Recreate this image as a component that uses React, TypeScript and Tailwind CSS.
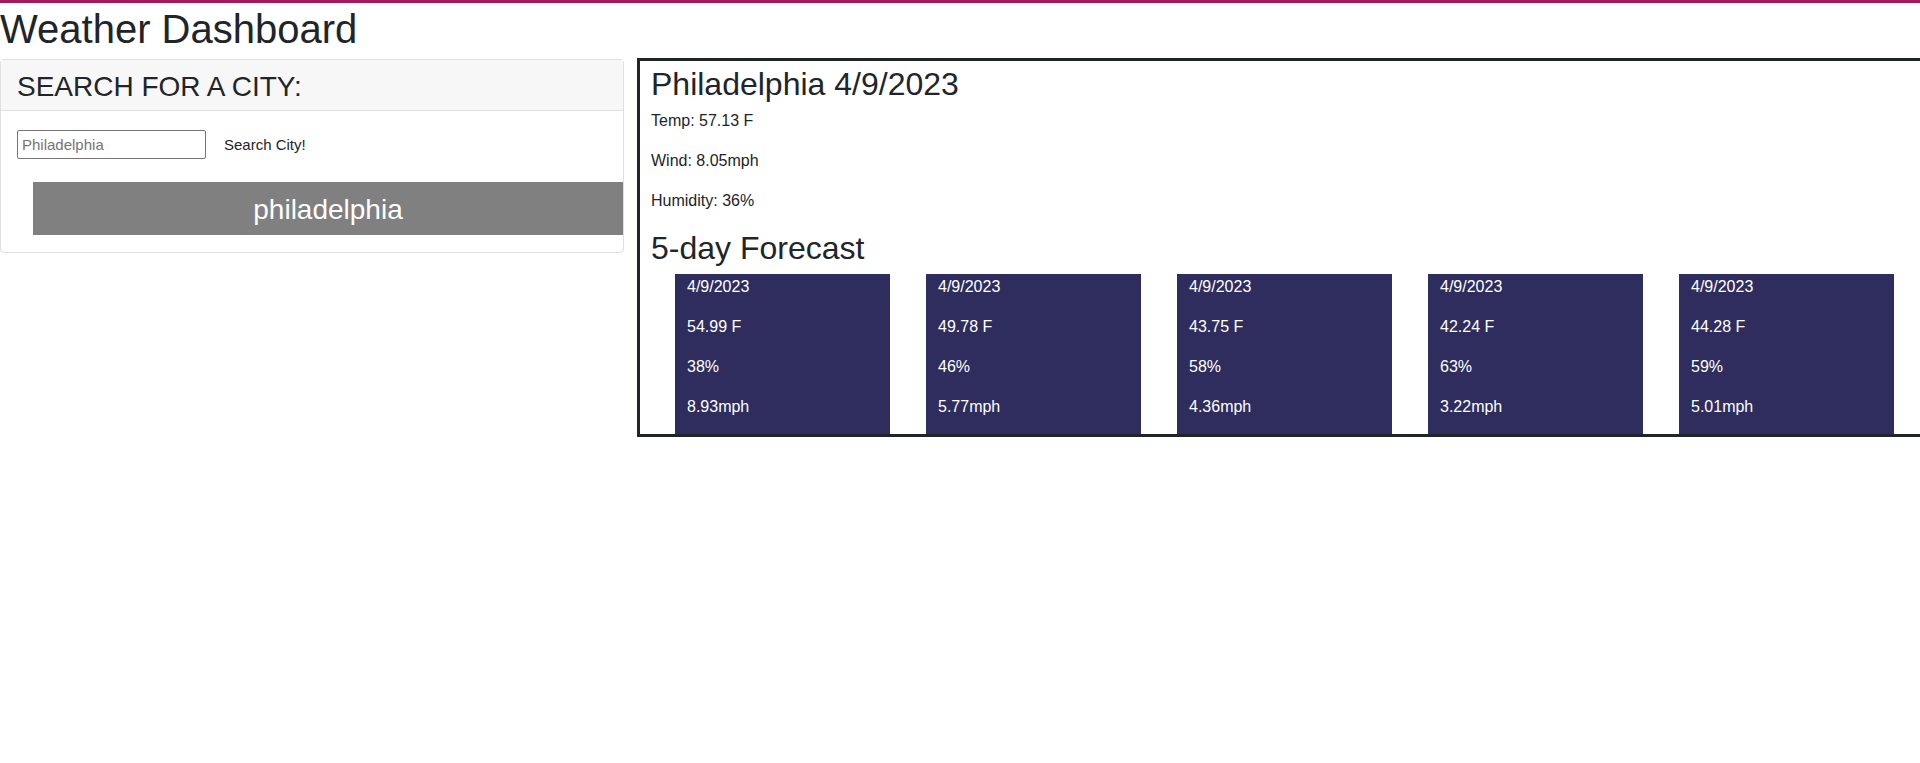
const forecast = [
  { date: '4/9/2023', temp: '54.99 F', humidity: '38%', wind: '8.93mph' },
  { date: '4/9/2023', temp: '49.78 F', humidity: '46%', wind: '5.77mph' },
  { date: '4/9/2023', temp: '43.75 F', humidity: '58%', wind: '4.36mph' },
  { date: '4/9/2023', temp: '42.24 F', humidity: '63%', wind: '3.22mph' },
  { date: '4/9/2023', temp: '44.28 F', humidity: '59%', wind: '5.01mph' },
];

function App() {
  return (
    <div className="min-h-screen bg-white border-t-[3px] border-[#a3195b] overflow-hidden text-[#212529] font-['Liberation_Sans',Arial,sans-serif]">
      {/* Header */}
      <h1 className="text-[40px] font-medium leading-[1.2] pt-[2px] mb-[6px]">Weather Dashboard</h1>

      <div className="flex items-start">
        {/* Search card */}
        <aside className="w-[624px] shrink-0 border border-[#dfdfdf] rounded-[4px]">
          <div className="bg-[#f7f7f7] border-b border-[#dfdfdf] px-4 pt-[10px] pb-[6px]">
            <h3 className="text-[28px] font-medium leading-[1.2]">SEARCH FOR A CITY:</h3>
          </div>
          <div className="pl-4 pt-[19px] pb-[17px]">
            <div className="flex items-center">
              <input
                type="text"
                placeholder="Philadelphia"
                className="w-[189px] h-[29px] border border-[#767676] rounded-[2px] px-[4px] text-[15px] placeholder:text-[#757575] outline-none"
              />
              <button className="ml-[18px] text-[15px] text-[#212529] pt-[3px]">Search City!</button>
            </div>
            <div className="mt-[23px] ml-4 bg-[#808080] text-white text-[28px] leading-[1.2] text-center pt-[11px] pb-[9px]">
              philadelphia
            </div>
          </div>
        </aside>

        {/* Current weather + forecast */}
        <main className="ml-[13px] -mt-px w-[1320px] shrink-0 border-[3px] border-[#212529] pl-[11px] pt-[4px]">
          <h2 className="text-[32px] font-medium leading-[1.2] mb-[6px]">Philadelphia 4/9/2023</h2>
          <p className="text-base leading-6 mb-4">Temp: 57.13 F</p>
          <p className="text-base leading-6 mb-4">Wind: 8.05mph</p>
          <p className="text-base leading-6 mb-4">Humidity: 36%</p>

          <h2 className="text-[32px] font-medium leading-[1.2] mb-[6px]">5-day Forecast</h2>
          <div className="flex gap-[36px] pl-6">
            {forecast.map((day, i) => (
              <div key={i} className="w-[215px] bg-[#2e2d5e] text-white pl-3 pt-px">
                <p className="text-base leading-6 mb-4">{day.date}</p>
                <p className="text-base leading-6 mb-4">{day.temp}</p>
                <p className="text-base leading-6 mb-4">{day.humidity}</p>
                <p className="text-base leading-6 mb-[15px]">{day.wind}</p>
              </div>
            ))}
          </div>
        </main>
      </div>
    </div>
  );
}

export default App;
